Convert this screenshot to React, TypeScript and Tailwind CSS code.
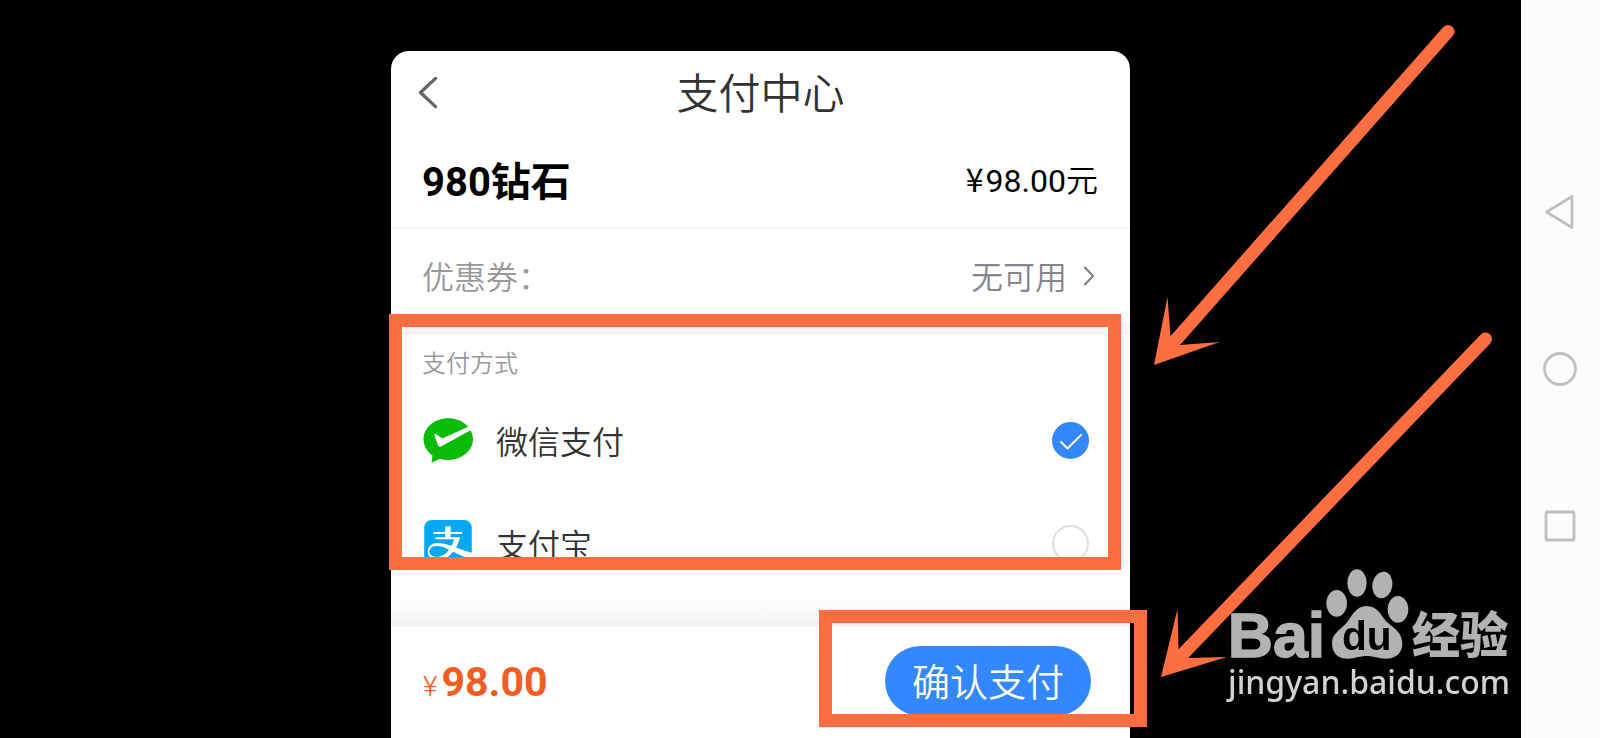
import { useState } from "react";
import { SiAlipay } from "react-icons/si";

function WechatPayIcon() {
  return (
    <svg viewBox="0 0 50 45" className="h-[45px] w-[50px]" aria-hidden="true">
      <path
        fill="#0abb07"
        d="M25.300 .3C39 .3 50 9.700 50 21.100S39 42 25.300 42c-3 0-5.700-.4-8.300-1.200L8.500 44.700l1-7.200C4 33.700 .5 27.800 .5 21.100 .5 9.700 11.600.3 25.300.3z"
      />
      <path fill="#fff" d="M11.200 16.800c.4-1.400 1.300-1.300 2.500-.4l4.200 3.200c1.100.7 2 .6 3.100.1L45.500 8.600l3 3.200L18.500 28.300c-1.600.9-2.700.5-3.400-.8z" />
    </svg>
  );
}

function BaiduLogo() {
  return (
    <svg viewBox="264 81 858 282" className="h-[94px] w-[286px] overflow-visible" role="img" aria-label="Baidu 经验">
      <g fill="#fff" opacity="0.7">
        <text x="263" y="348" fontSize="188" fontWeight="700" fontFamily="Liberation Sans, sans-serif" stroke="#fff" strokeWidth="4">Bai</text>
        <ellipse cx="590" cy="187" rx="31" ry="40" />
        <ellipse cx="651" cy="126" rx="29" ry="41" />
        <ellipse cx="727" cy="132" rx="30" ry="40" transform="rotate(10 727 132)" />
        <ellipse cx="774" cy="205" rx="31" ry="40" />
        <path d="M680 195C712 195 722 222 738 240C752 256 787 270 787 308C787 340 762 353 737 353C715 353 700 345 680 345C660 345 645 353 623 353C598 353 576 340 576 305C576 275 608 262 622 243C638 222 648 195 680 195Z" />
        <text x="815" y="335" fontSize="145" fontWeight="900" fontFamily="Noto Sans CJK SC, sans-serif">经验</text>
      </g>
      <text x="606" y="328" fontSize="122" fontWeight="700" fill="#000" fontFamily="Liberation Sans, sans-serif">du</text>
    </svg>
  );
}

function Arrows() {
  return (
    <svg
      viewBox="1130 51 391 687"
      className="pointer-events-none absolute top-0 left-full h-[687px] w-[391px] overflow-visible"
      aria-hidden="true"
    >
      <g fill="#ff6e40" stroke="none">
        <path d="M1448 31.500L1174 342" stroke="#ff6e40" strokeWidth="13" strokeLinecap="round" />
        <path d="M1154 365L1167.500 297L1170.500 336L1180 345L1219.500 342Z" />
        <path d="M1485.500 339L1182 655" stroke="#ff6e40" strokeWidth="13" strokeLinecap="round" />
        <path d="M1161 677L1177.500 609L1178.500 649L1188 658L1227 657Z" />
      </g>
    </svg>
  );
}

type Method = { id: string; name: string; icon: React.ReactNode };

const methods: Method[] = [
  { id: "wechat", name: "微信支付", icon: <WechatPayIcon /> },
  { id: "alipay", name: "支付宝", icon: <SiAlipay className="size-12 text-[#06a8f1]" aria-hidden="true" /> },
];

export default function App() {
  const [method, setMethod] = useState("wechat");

  return (
    <div className="flex min-h-screen bg-black font-[Roboto,'Noto_Sans_CJK_SC',sans-serif]">
      <main className="relative flex min-w-0 flex-1 justify-center pt-[51px]">
        <div className="relative flex w-[739px] max-w-full flex-col rounded-t-[18px] bg-white">
          <header className="relative flex h-[84px] items-center justify-center">
            <button type="button" aria-label="返回" className="absolute left-[23px] p-1">
              <svg viewBox="0 0 20 34" className="h-8 w-5" fill="none" stroke="#666" strokeWidth="3.500" strokeLinecap="round" strokeLinejoin="round">
                <path d="M18 1.500L2 16.500L18 31.500" />
              </svg>
            </button>
            <h1 className="pt-1 text-[42px] leading-none font-[350] text-[#333]">支付中心</h1>
          </header>

          <section className="flex h-[94px] items-center justify-between border-b-2 border-[#f5f5f5] pr-8 pl-[31px]">
            <h2 className="pt-1 text-[40px] leading-none font-bold text-black">980钻石</h2>
            <p className="flex items-baseline gap-0.5 pb-1 text-[32px] leading-none text-black">
              <span className="font-['Noto_Sans_CJK_SC',sans-serif]">¥</span>
              <span>98.00<span className="font-[350]">元</span></span>
            </p>
          </section>

          <section className="flex h-[94px] items-center justify-between pr-[33px] pl-[31px] text-[32px] leading-none font-[350]">
            <span className="pt-1 text-[#999]">优惠券：</span>
            <button type="button" className="flex items-center gap-3.5 text-[#85858f]">
              <span className="pt-1">无可用</span>
              <svg viewBox="0 0 16 20" className="h-5 w-4" fill="none" stroke="#858589" strokeWidth="2.200" strokeLinecap="round" strokeLinejoin="round">
                <path d="M4 1.500L12 10L4 18.500" />
              </svg>
            </button>
          </section>

          <div className="h-3 bg-[#f5f5f5]" />

          <div className="relative">
            <fieldset>
              <legend className="flex h-[54px] items-center pt-1 pl-[31px] text-[24px] leading-none font-[350] text-[#999]">支付方式</legend>
              {methods.map((m) => (
                <label key={m.id} className="flex h-[103px] items-center pr-[41px] pl-8">
                  <span className="flex w-[50px] justify-center">{m.icon}</span>
                  <span className="ml-[23px] flex-1 pt-1 text-[32px] leading-none font-[350] text-[#333]">{m.name}</span>
                  <span className="relative grid size-[38px] place-items-center">
                    <input
                      type="radio"
                      name="method"
                      value={m.id}
                      checked={method === m.id}
                      onChange={() => setMethod(m.id)}
                      className="size-[37px] appearance-none rounded-full border-2 border-[#ddd] bg-white checked:border-[#3388ff] checked:bg-[#3388ff]"
                    />
                    {method === m.id && (
                      <svg viewBox="0 0 38 38" className="pointer-events-none absolute inset-0" fill="none" stroke="#fff" strokeWidth="2" strokeLinecap="round" strokeLinejoin="round">
                        <path d="M10 20L16.500 26.500L30 13" />
                      </svg>
                    )}
                  </span>
                </label>
              ))}
            </fieldset>
            <div className="pointer-events-none absolute -top-[21px] right-[9px] bottom-[25px] -left-0.5 border-[13px] border-[#ff6e40]" />
          </div>

          <div className="min-h-8 flex-1 bg-linear-to-b from-white to-[#f2f2f2]" />

          <footer className="relative flex h-[111px] items-center justify-between pr-[39px] pb-1 pl-8">
            <p className="flex items-baseline gap-1 pt-1 leading-none text-[#f45d22]">
              <span className="text-[28px] font-[350]">¥</span>
              <strong className="text-[41px] font-bold">98.00</strong>
            </p>
            <button type="button" className="h-[70px] rounded-full bg-[#3388ff] px-[27px] pt-1 text-[38px] leading-none font-[350] text-white">
              确认支付
            </button>
            <div className="pointer-events-none absolute -top-[17px] -right-[17px] bottom-[11px] w-[328px] border-[13px] border-[#ff6e40]" />
          </footer>

          <Arrows />
        </div>

        <div className="absolute right-[7px] bottom-9 flex flex-col items-start">
          <BaiduLogo />
          <span className="font-['Noto_Sans',sans-serif] text-[32px] leading-10 font-medium text-[#d2d2d2]">jingyan.baidu.com</span>
        </div>
      </main>

      <nav className="flex w-[79px] shrink-0 flex-col justify-center bg-[#fcfcfc] pr-0.5" aria-label="系统导航">
        <button type="button" aria-label="返回上一页" className="flex h-[157px] items-center justify-center">
          <svg viewBox="0 0 36 36" className="size-9" fill="none" stroke="#bfbfbf" strokeWidth="2.800" strokeLinejoin="round">
            <path d="M4.500 18L30 2.500V33.500Z" />
          </svg>
        </button>
        <button type="button" aria-label="主屏幕" className="flex h-[157px] items-center justify-center">
          <svg viewBox="0 0 36 36" className="size-9" fill="none" stroke="#bfbfbf" strokeWidth="2.800">
            <circle cx="18" cy="18" r="15.500" />
          </svg>
        </button>
        <button type="button" aria-label="最近任务" className="flex h-[157px] items-center justify-center">
          <svg viewBox="0 0 36 36" className="size-9" fill="none" stroke="#bfbfbf" strokeWidth="2.800">
            <rect x="4" y="4" width="28" height="28" rx="1" />
          </svg>
        </button>
      </nav>
    </div>
  );
}
